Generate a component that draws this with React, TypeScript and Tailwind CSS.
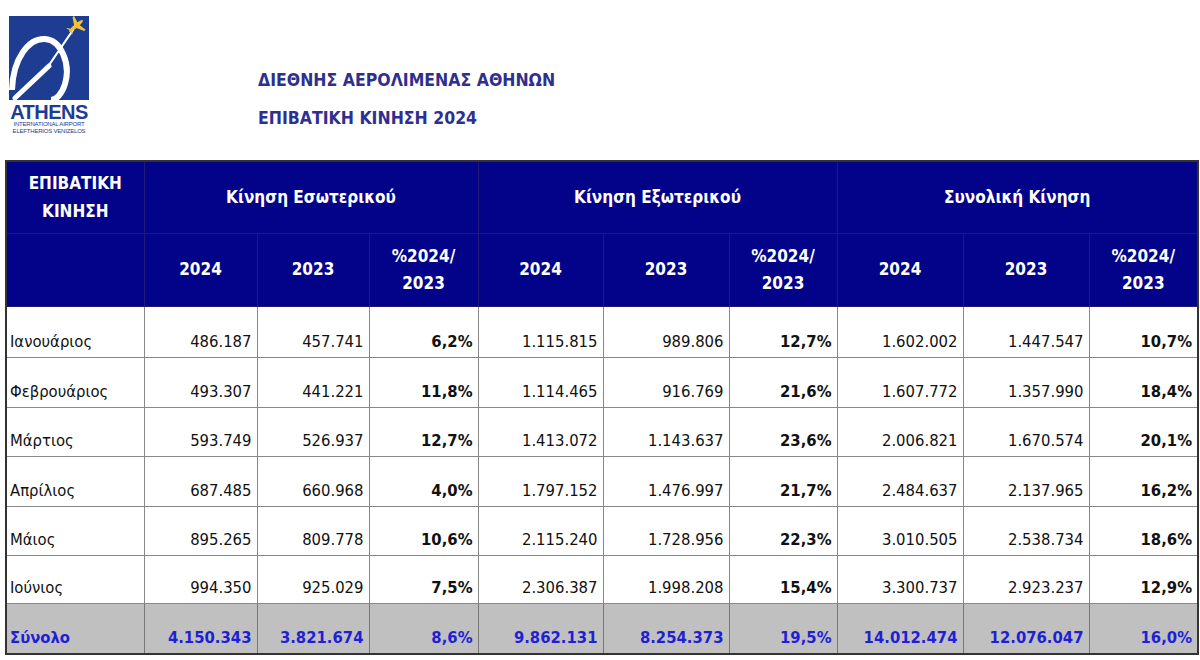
import React from "react"

const widths = [138, 113, 112, 109, 125, 126, 108, 126, 126, 109]

type Row = { month: string; values: string[] }

const rows: Row[] = [
  { month: "Ιανουάριος", values: ["486.187", "457.741", "6,2%", "1.115.815", "989.806", "12,7%", "1.602.002", "1.447.547", "10,7%"] },
  { month: "Φεβρουάριος", values: ["493.307", "441.221", "11,8%", "1.114.465", "916.769", "21,6%", "1.607.772", "1.357.990", "18,4%"] },
  { month: "Μάρτιος", values: ["593.749", "526.937", "12,7%", "1.413.072", "1.143.637", "23,6%", "2.006.821", "1.670.574", "20,1%"] },
  { month: "Απρίλιος", values: ["687.485", "660.968", "4,0%", "1.797.152", "1.476.997", "21,7%", "2.484.637", "2.137.965", "16,2%"] },
  { month: "Μάιος", values: ["895.265", "809.778", "10,6%", "2.115.240", "1.728.956", "22,3%", "3.010.505", "2.538.734", "18,6%"] },
  { month: "Ιούνιος", values: ["994.350", "925.029", "7,5%", "2.306.387", "1.998.208", "15,4%", "3.300.737", "2.923.237", "12,9%"] },
]

const rowHeights = ["h-[51px]", "h-[50px]", "h-[49px]", "h-[50px]", "h-[49px]", "h-[48px]"]

const total = ["4.150.343", "3.821.674", "8,6%", "9.862.131", "8.254.373", "19,5%", "14.012.474", "12.076.047", "16,0%"]

function Logo() {
  return (
    <div className="flex w-[82px] flex-col items-center">
      <svg width="80" height="84" viewBox="0 0 80 84">
        <rect width="80" height="84" fill="#1d3c92" />
        <path d="M3 74 C4 42 20 22 36 23 C52 24 62 48 56 68 C53 78 47 84 42 84" fill="none" stroke="#fff" strokeWidth="6" />
        <path d="M6 82 L40 50" fill="none" stroke="#fff" strokeWidth="5" strokeLinecap="round" />
        <path d="M38 52 L64 14" fill="none" stroke="#fff" strokeWidth="2.2" strokeLinecap="round" />
        <g transform="translate(67 10) rotate(-40)" fill="#f2c230">
          <ellipse cx="0" cy="0" rx="9" ry="2" />
          <path d="M-2 0 L3 -9 L5 -9 L3 0 L5 9 L3 9 Z" />
          <path d="M-7 0 L-9 -4 L-8 -4 L-5 0 L-8 4 L-9 4 Z" />
        </g>
      </svg>
      <div className="mt-[3px] font-['Liberation_Sans',sans-serif] text-[20px] font-black leading-[18px] tracking-[-0.5px] text-[#1d3c92]">
        ATHENS
      </div>
      <div className="font-['Liberation_Sans',sans-serif] text-[6px] leading-[7px] tracking-[-0.2px] text-[#1d3c92]">
        INTERNATIONAL AIRPORT
      </div>
      <div className="font-['Liberation_Sans',sans-serif] text-[6px] leading-[7px] tracking-[-0.2px] text-[#1d3c92]">
        ELEFTHERIOS VENIZELOS
      </div>
    </div>
  )
}

export default function App() {
  const hd = "border border-[#1c1c78] bg-[#03038a] text-white font-bold text-center text-[17px]"
  return (
    <div className="h-[660px] w-[1200px] overflow-hidden bg-white font-['DejaVu_Sans_Condensed','DejaVu_Sans',sans-serif] [font-stretch:condensed]">
      <div className="flex h-[160px] items-start">
        <div className="pl-[8px] pt-[16px]">
          <Logo />
        </div>
        <div className="ml-[168px] pt-[61px] text-[17.5px] font-bold leading-[38px] text-[#2e2f8f]">
          <div>ΔΙΕΘΝΗΣ ΑΕΡΟΛΙΜΕΝΑΣ ΑΘΗΝΩΝ</div>
          <div>ΕΠΙΒΑΤΙΚΗ ΚΙΝΗΣΗ 2024</div>
        </div>
      </div>
      <div className="pl-[5px]">
        <table className="table-fixed border-collapse border-2 border-[#333] text-[16.5px]">
          <colgroup>
            {widths.map((w, i) => (
              <col key={i} style={{ width: w }} />
            ))}
          </colgroup>
          <thead>
            <tr className="h-[72px]">
              <th className={`${hd} leading-[28px]`}>
                ΕΠΙΒΑΤΙΚΗ
                <br />
                ΚΙΝΗΣΗ
              </th>
              <th colSpan={3} className={hd}>Κίνηση Εσωτερικού</th>
              <th colSpan={3} className={hd}>Κίνηση Εξωτερικού</th>
              <th colSpan={3} className={hd}>Συνολική Κίνηση</th>
            </tr>
            <tr className="h-[73px]">
              <th className={hd}></th>
              {[0, 1, 2].map((g) => (
                <React.Fragment key={g}>
                  <th className={hd}>2024</th>
                  <th className={hd}>2023</th>
                  <th className={`${hd} leading-[27px]`}>
                    %2024/
                    <br />
                    2023
                  </th>
                </React.Fragment>
              ))}
            </tr>
          </thead>
          <tbody className="text-[#111]">
            {rows.map((r, i) => (
              <tr key={r.month} className={rowHeights[i]}>
                <td className="border border-[#888] pb-[2px] pl-[3px] align-bottom">{r.month}</td>
                {r.values.map((v, j) => (
                  <td
                    key={j}
                    className={`border border-[#888] pb-[2px] pr-[5px] text-right align-bottom ${j % 3 === 2 ? "font-bold" : ""}`}
                  >
                    {v}
                  </td>
                ))}
              </tr>
            ))}
            <tr className="h-[51px] bg-[#c0c0c0] font-bold text-[#1f1fd6]">
              <td className="border border-[#777] pb-[2px] pl-[3px] align-bottom">Σύνολο</td>
              {total.map((v, j) => (
                <td key={j} className="border border-[#777] pb-[2px] pr-[5px] text-right align-bottom">
                  {v}
                </td>
              ))}
            </tr>
          </tbody>
        </table>
      </div>
    </div>
  )
}
